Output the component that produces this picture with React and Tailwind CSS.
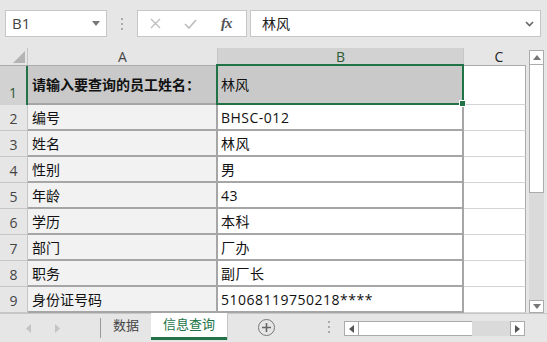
import React from 'react'

const rows = [
  ['编号', 'BHSC-012'],
  ['姓名', '林风'],
  ['性别', '男'],
  ['年龄', '43'],
  ['学历', '本科'],
  ['部门', '厂办'],
  ['职务', '副厂长'],
  ['身份证号码', '51068119750218****'],
]

function TopBar() {
  return (
    <div className="h-[48px] flex items-start pt-[10px] pl-[5px]">
      {/* name box */}
      <div className="w-[102px] h-[27px] bg-white border border-[#c6c6c6] flex items-center pl-[6px] pr-[6px]">
        <span className="text-[15px] text-[#444] flex-1">B1</span>
        <svg width="8" height="5" viewBox="0 0 8 5"><path d="M0 0h8L4 5z" fill="#777" /></svg>
      </div>
      <div className="w-[30px] h-[27px] flex flex-col items-center justify-center gap-[3px]">
        <span className="w-[2px] h-[2px] bg-[#aaa]" />
        <span className="w-[2px] h-[2px] bg-[#aaa]" />
        <span className="w-[2px] h-[2px] bg-[#aaa]" />
      </div>
      {/* formula buttons */}
      <div className="w-[110px] h-[27px] bg-white border border-[#c6c6c6] flex items-center">
        <svg className="ml-[12px]" width="11" height="11" viewBox="0 0 11 11">
          <path d="M1 1l9 9M10 1l-9 9" stroke="#bdbdbd" strokeWidth="1.3" />
        </svg>
        <svg className="ml-[23px]" width="13" height="10" viewBox="0 0 13 10">
          <path d="M1 5l4 4 7-8" stroke="#bdbdbd" strokeWidth="1.6" fill="none" />
        </svg>
        <span className="ml-[24px] text-[15px] italic font-bold text-[#555] font-['Liberation_Serif',serif] tracking-[-1px]">fx</span>
      </div>
      {/* formula input */}
      <div className="ml-[3px] w-[291px] h-[27px] bg-white border border-[#c6c6c6] flex items-center pl-[11px] pr-[6px]">
        <span className="flex-1 text-[14px] text-[#222]">林风</span>
        <svg width="9" height="6" viewBox="0 0 9 6"><path d="M1 1l3.5 3.5L8 1" stroke="#666" strokeWidth="1.6" fill="none" /></svg>
      </div>
    </div>
  )
}

function Sheet() {
  return (
    <div className="w-[526px] h-[265px] overflow-hidden bg-white">
      {/* column headers */}
      <div className="flex h-[18px] bg-[#e6e6e6] border-b border-[#ababab] text-[14px] text-[#444]">
        <div className="w-[28px] border-r border-[#c6c6c6] flex items-end justify-end pr-[2px] pb-[2px]">
          <svg width="12" height="12" viewBox="0 0 12 12"><path d="M12 0v12H0z" fill="#b4b4b4" /></svg>
        </div>
        <div className="w-[190px] border-r border-[#c6c6c6] flex items-center justify-center leading-none">A</div>
        <div className="w-[246px] bg-[#d2d2d2] border-r border-[#c6c6c6] flex items-center justify-center leading-none text-[#2f5a35]">B</div>
        <div className="flex-1 flex items-center justify-center leading-none pl-[8px] text-[#222]">C</div>
      </div>

      {/* row 1 */}
      <div className="flex h-[39px] text-[14px]">
        <div className="w-[28px] bg-[#d2d2d2] border-r-2 border-[#217346] flex items-end justify-center pb-[2px] text-[14px] text-[#2f5a35]">1</div>
        <div className="w-[190px] bg-[#c9c9c9] border-b-2 border-r-2 border-[#a6a6a6] flex items-center pl-[4px] font-bold text-[#111] whitespace-nowrap">请输入要查询的员工姓名：</div>
        <div className="relative w-[246px] bg-[#c9c9c9] border-b-2 border-r-2 border-[#a6a6a6] flex items-center pl-[3px] text-[#111]">
          林风
          <div className="absolute top-[-2px] left-[-2px] right-[-2px] bottom-[-2px] border-2 border-[#217346]" />
          <div className="absolute right-[-4px] bottom-[-4px] w-[7px] h-[7px] bg-[#217346] border border-white" />
        </div>
        <div className="flex-1 border-b border-[#d4d4d4] border-r border-r-[#ababab]" />
      </div>

      {rows.map(([k, v], i) => (
        <div key={k} className="flex h-[26px] text-[14px] text-[#111]">
          <div className="w-[28px] bg-[#e6e6e6] border-r border-b border-[#c6c6c6] flex items-center justify-center pt-[2px] text-[14px] text-[#444]">{i + 2}</div>
          <div className="w-[190px] bg-[#f2f2f2] border-b-2 border-r-2 border-[#a6a6a6] flex items-center pl-[4px]">{k}</div>
          <div className="w-[246px] border-b-2 border-r-2 border-[#a6a6a6] flex items-center pl-[3px] tracking-[0.5px]">{v}</div>
          <div className="flex-1 border-b border-[#d4d4d4] border-r border-r-[#ababab]" />
        </div>
      ))}
      <div className="flex h-[10px]">
        <div className="w-[28px] bg-[#e6e6e6] border-r border-[#c6c6c6]" />
        <div className="w-[190px] bg-[#f2f2f2] border-r-2 border-[#a6a6a6]" />
        <div className="w-[246px] border-r-2 border-[#a6a6a6]" />
      </div>
    </div>
  )
}

function VScroll() {
  return (
    <div className="ml-[3px] w-[15px] pt-[2px] flex flex-col h-[265px]">
      <div className="h-[15px] bg-white border border-[#ababab] flex items-center justify-center">
        <svg width="8" height="5" viewBox="0 0 8 5"><path d="M4 0l4 5H0z" fill="#777" /></svg>
      </div>
      <div className="h-[128px] bg-white border-x border-b border-[#ababab]" />
      <div className="flex-1 bg-[#dadada]" />
      <div className="h-[13px] bg-white border border-[#ababab] flex items-center justify-center">
        <svg width="8" height="5" viewBox="0 0 8 5"><path d="M0 0h8L4 5z" fill="#777" /></svg>
      </div>
    </div>
  )
}

function TabBar() {
  return (
    <div className="h-[29px] border-t border-[#c6c6c6] flex items-start text-[13px]">
      <div className="w-[100px] h-[28px] flex items-center">
        <svg className="ml-[26px]" width="5" height="9" viewBox="0 0 5 9"><path d="M5 0v9L0 4.5z" fill="#c4c4c4" /></svg>
        <svg className="ml-[24px]" width="5" height="9" viewBox="0 0 5 9"><path d="M0 0v9l5-4.5z" fill="#c4c4c4" /></svg>
      </div>
      <div className="w-px h-[20px] mt-[4px] bg-[#9a9a9a]" />
      <div className="w-[50px] h-[24px] flex items-center justify-center text-[#444]">数据</div>
      <div className="-mt-px w-[76px] h-[27px] bg-white border-b-[3px] border-[#217346] flex items-center justify-center text-[#217346] shadow-[1px_0_0_#c6c6c6]">信息查询</div>
      <div className="ml-[31px] mt-[5px] w-[17px] h-[17px] rounded-full border border-[#777] flex items-center justify-center">
        <svg width="9" height="9" viewBox="0 0 9 9"><path d="M4.5 0v9M0 4.5h9" stroke="#666" strokeWidth="1.6" /></svg>
      </div>
      <div className="ml-[53px] mt-[7px] flex flex-col gap-[3px]">
        <span className="w-[2px] h-[2px] bg-[#aaa]" />
        <span className="w-[2px] h-[2px] bg-[#aaa]" />
        <span className="w-[2px] h-[2px] bg-[#aaa]" />
      </div>
      <div className="ml-[14px] mt-[7px] w-[181px] h-[15px] flex">
        <div className="w-[15px] bg-white border border-[#ababab] flex items-center justify-center">
          <svg width="5" height="8" viewBox="0 0 5 8"><path d="M5 0v8L0 4z" fill="#555" /></svg>
        </div>
        <div className="w-[113px] bg-white border-y border-[#ababab]" />
        <div className="flex-1 bg-[#dadada]" />
        <div className="w-[15px] bg-white border border-[#ababab] flex items-center justify-center">
          <svg width="5" height="8" viewBox="0 0 5 8"><path d="M0 0v8l5-4z" fill="#555" /></svg>
        </div>
      </div>
    </div>
  )
}

export default function App() {
  return (
    <div className="w-[547px] h-[342px] overflow-hidden bg-[#e6e6e6] font-['Open_Sans','Noto_Sans_CJK_SC',sans-serif]">
      <TopBar />
      <div className="flex">
        <Sheet />
        <VScroll />
      </div>
      <TabBar />
    </div>
  )
}
